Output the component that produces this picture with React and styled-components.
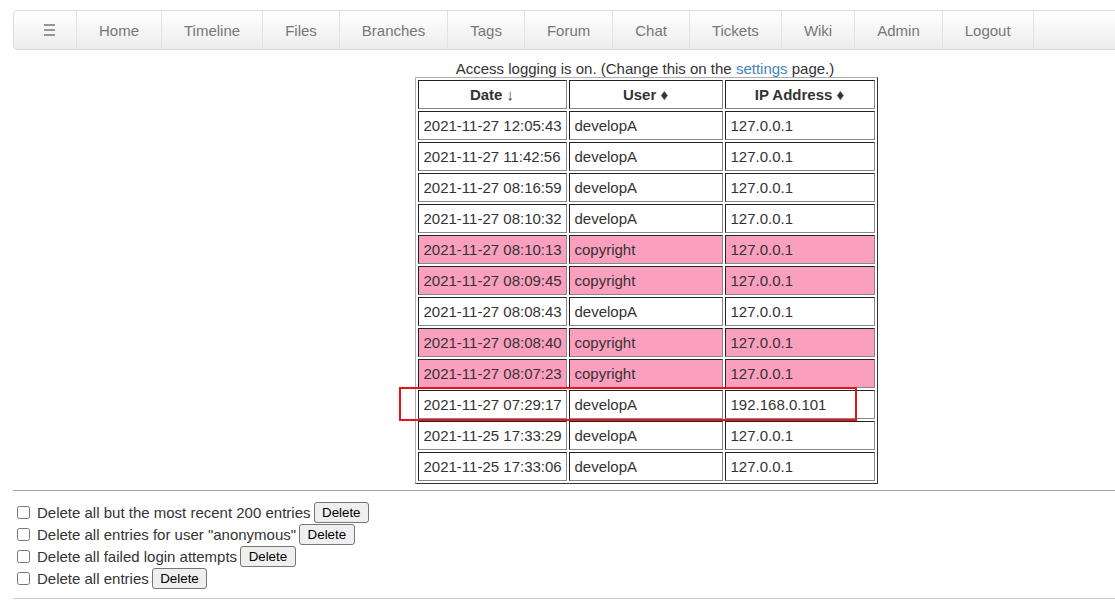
import React from "react"
import styled, { createGlobalStyle } from "styled-components"

const GlobalStyle = createGlobalStyle`
  html, body {
    margin: 0;
    padding: 0;
    overflow: hidden;
    background: #fff;
    font-family: "Liberation Sans", Arial, sans-serif;
    color: #333;
  }
`

const Page = styled.div`
  width: 1264px;
  margin-left: 13px;
  padding-top: 10px;
`

const NavBar = styled.nav`
  display: flex;
  align-items: stretch;
  box-sizing: border-box;
  height: 40px;
  border: 1px solid #dcdcdc;
  border-radius: 4px;
  background: linear-gradient(#ffffff, #ececec);
`

const NavItem = styled.a`
  display: flex;
  align-items: center;
  padding: ${(p) => (p.$menu ? "0 21px 0 30px" : "0 22px")};
  border-right: 1px solid #e2e2e2;
  color: #777;
  font-size: 15px;
  text-decoration: none;
`

const Main = styled.div`
  display: flex;
  flex-direction: column;
  align-items: center;
  padding-top: 10px;
`

const Caption = styled.div`
  font-size: 15px;
  line-height: 17px;
  a {
    color: #4183c4;
    text-decoration: none;
  }
`

const TableWrap = styled.div`
  position: relative;
  left: 1px;
`

const LogTable = styled.table`
  table-layout: fixed;
  width: 463px;
  border-collapse: separate;
  border-spacing: 2px;
  border: 1px solid;
  border-color: #b0b0b0 #333 #333 #b0b0b0;
  font-size: 15px;
`

const HeadCell = styled.th`
  box-sizing: border-box;
  width: ${(p) => p.$w}px;
  padding: 5px;
  line-height: 17px;
  border: 1px solid;
  border-color: #222 #888 #888 #222;
  font-weight: bold;
  text-align: center;
  white-space: nowrap;
`

const Cell = styled.td`
  box-sizing: border-box;
  padding: 5px;
  line-height: 17px;
  border: 1px solid;
  border-color: #222 #888 #888 #222;
  background: ${(p) => (p.$fail ? "#fb9fbf" : "#fff")};
  white-space: nowrap;
`

const Highlight = styled.div`
  position: absolute;
  left: -16px;
  top: 310px;
  width: 458px;
  height: 34px;
  box-sizing: border-box;
  border: 2px solid #e3161c;
  pointer-events: none;
`

const Rule = styled.hr`
  margin: ${(p) => (p.$top ? "6px 0 0" : "9px 0 0")};
  border: 0;
  border-top: 1px solid ${(p) => (p.$top ? "#a5a5a5" : "#cfcfcf")};
`

const Options = styled.div`
  padding-top: 10px;
`

const OptionRow = styled.label`
  display: flex;
  align-items: center;
  height: 22px;
  font-size: 15px;
  input {
    width: 13px;
    height: 13px;
    margin: 0 7px 0 4px;
  }
`

const DeleteButton = styled.button`
  margin-left: 3px;
  height: 21px;
  padding: 0 7.5px;
  font-family: "Liberation Sans", Arial, sans-serif;
  font-size: 13.33px;
  color: #000;
  background: #efefef;
  border: 1px solid #767676;
  border-radius: 3px;
`

const MenuIcon = () => (
  <svg width="11" height="12" viewBox="0 0 11 12">
    <g stroke="#777" strokeWidth="1.5">
      <line x1="0" y1="1" x2="11" y2="1" />
      <line x1="0" y1="6" x2="11" y2="6" />
      <line x1="0" y1="11" x2="11" y2="11" />
    </g>
  </svg>
)

const links = ["Home", "Timeline", "Files", "Branches", "Tags", "Forum", "Chat", "Tickets", "Wiki", "Admin", "Logout"]

const rows = [
  ["2021-11-27 12:05:43", "developA", "127.0.0.1"],
  ["2021-11-27 11:42:56", "developA", "127.0.0.1"],
  ["2021-11-27 08:16:59", "developA", "127.0.0.1"],
  ["2021-11-27 08:10:32", "developA", "127.0.0.1"],
  ["2021-11-27 08:10:13", "copyright", "127.0.0.1", true],
  ["2021-11-27 08:09:45", "copyright", "127.0.0.1", true],
  ["2021-11-27 08:08:43", "developA", "127.0.0.1"],
  ["2021-11-27 08:08:40", "copyright", "127.0.0.1", true],
  ["2021-11-27 08:07:23", "copyright", "127.0.0.1", true],
  ["2021-11-27 07:29:17", "developA", "192.168.0.101"],
  ["2021-11-25 17:33:29", "developA", "127.0.0.1"],
  ["2021-11-25 17:33:06", "developA", "127.0.0.1"],
]

const options = [
  "Delete all but the most recent 200 entries",
  'Delete all entries for user "anonymous"',
  "Delete all failed login attempts",
  "Delete all entries",
]

export default function App() {
  return (
    <>
      <GlobalStyle />
      <Page>
        <NavBar>
          <NavItem $menu href="#">
            <MenuIcon />
          </NavItem>
          {links.map((l) => (
            <NavItem key={l} href="#">
              {l}
            </NavItem>
          ))}
        </NavBar>

        <Main>
          <Caption>
            Access logging is on. (Change this on the <a href="#">settings</a> page.)
          </Caption>
          <TableWrap>
            <LogTable>
              <thead>
                <tr>
                  <HeadCell $w={149}>Date ↓</HeadCell>
                  <HeadCell $w={154}>User ♦</HeadCell>
                  <HeadCell $w={150}>IP Address ♦</HeadCell>
                </tr>
              </thead>
              <tbody>
                {rows.map(([date, user, ip, fail]) => (
                  <tr key={date}>
                    <Cell $fail={fail}>{date}</Cell>
                    <Cell $fail={fail}>{user}</Cell>
                    <Cell $fail={fail}>{ip}</Cell>
                  </tr>
                ))}
              </tbody>
            </LogTable>
            <Highlight />
          </TableWrap>
        </Main>

        <Rule $top />
        <Options>
          {options.map((o) => (
            <OptionRow key={o}>
              <input type="checkbox" />
              {o}
              <DeleteButton type="button">Delete</DeleteButton>
            </OptionRow>
          ))}
        </Options>
        <Rule />
      </Page>
    </>
  )
}
